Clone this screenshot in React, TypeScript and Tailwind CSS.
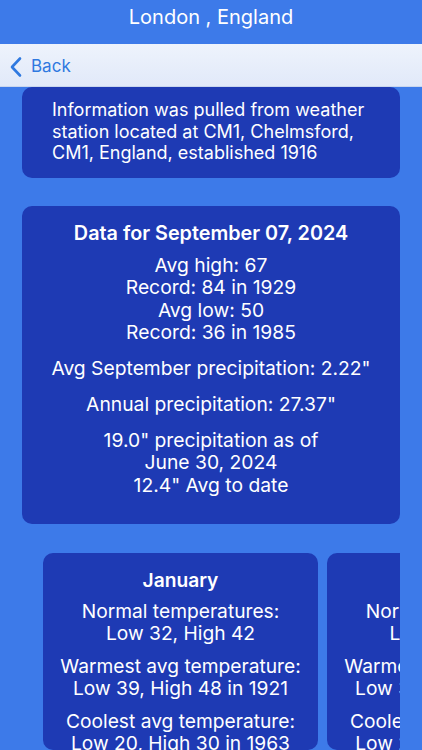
import React from "react";

const months = [
  {
    name: "January",
    groups: [
      ["Normal temperatures:", "Low 32, High 42"],
      ["Warmest avg temperature:", "Low 39, High 48 in 1921"],
      ["Coolest avg temperature:", "Low 20, High 30 in 1963"],
    ],
  },
  {
    name: "February",
    groups: [
      ["Normal temperatures:", "Low 32, High 44"],
      ["Warmest avg temperature:", "Low 38, High 50 in 1998"],
      ["Coolest avg temperature:", "Low 24, High 33 in 1986"],
    ],
  },
];

export default function App() {
  return (
    <div
      className="w-[422px] h-[750px] overflow-hidden bg-[#3d7ae9] flex flex-col text-white"
      style={{ fontFamily: "Inter, 'Noto Sans', sans-serif" }}
    >
      <div className="h-[44px] shrink-0 flex items-start justify-center text-[20px] leading-[24px] pt-[5px]">
        London , England
      </div>
      <div className="h-[43px] shrink-0 bg-gradient-to-b from-[#eef3fc] to-[#e1e9f9] border-b border-[#c9d6ee] flex items-center pt-[4px] pl-[9px] gap-[8px] text-[#2f79e0] text-[17px]">
        <svg width="14" height="22" viewBox="0 0 14 22" fill="none">
          <path d="M11 2.5 L3 11 L11 19.5" stroke="#2f79e0" strokeWidth="2.6" strokeLinecap="round" strokeLinejoin="round" />
        </svg>
        <span>Back</span>
      </div>
      <div className="flex-1 overflow-hidden flex flex-col">
        <div className="mx-[22px] rounded-[10px] bg-[#1e3ab4] pl-[30px] pr-[16px] pt-[12px] pb-[14px] text-[18px] leading-[21.5px]">
          Information was pulled from weather station located at CM1, Chelmsford, CM1, England, established 1916
        </div>
        <div className="mx-[22px] mt-[28px] rounded-[10px] bg-[#1e3ab4] pt-[15px] pb-[28px] flex flex-col items-center text-center text-[19.3px] leading-[22.5px]">
          <div className="font-semibold text-[19.8px] leading-[24px]">Data for September 07, 2024</div>
          <div className="mt-[9px]">Avg high: 67</div>
          <div>Record: 84 in 1929</div>
          <div>Avg low: 50</div>
          <div>Record: 36 in 1985</div>
          <div className="mt-[13px]">Avg September precipitation: 2.22"</div>
          <div className="mt-[14px]">Annual precipitation: 27.37"</div>
          <div className="mt-[13px]">19.0" precipitation as of</div>
          <div>June 30, 2024</div>
          <div>12.4" Avg to date</div>
        </div>
        <div className="mx-[22px] mt-[29px] overflow-hidden flex gap-[9px] pl-[21px]">
          {months.map((m) => (
            <div
              key={m.name}
              className="w-[275px] shrink-0 rounded-[10px] bg-[#1e3ab4] pt-[15px] pb-[16px] flex flex-col items-center text-center text-[19.2px] leading-[22px] whitespace-nowrap"
            >
              <div className="font-semibold leading-[24px]">{m.name}</div>
              {m.groups.map((g, i) => (
                <div key={i} className={i === 0 ? "mt-[8px]" : "mt-[11px]"}>
                  <div>{g[0]}</div>
                  <div>{g[1]}</div>
                </div>
              ))}
            </div>
          ))}
        </div>
      </div>
    </div>
  );
}
